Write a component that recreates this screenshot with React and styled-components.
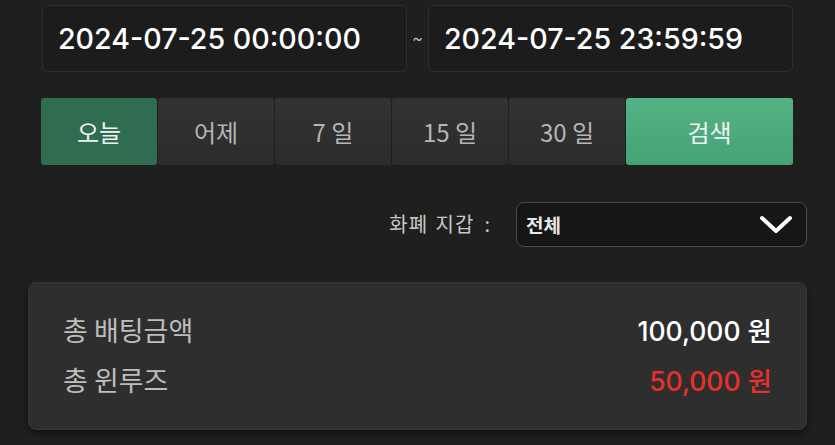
import React from 'react'
import styled, { createGlobalStyle } from 'styled-components';

const GlobalStyle = createGlobalStyle`
    html, body {
        margin: 0;
        padding: 0;
        background: #1f1f1f;
    }
    body {
        font-family: Inter, "Noto Sans CJK KR", sans-serif;
        width: 835px;
        height: 445px;
        overflow: hidden;
    }
`;

const Page = styled.div`
    display: flex;
    flex-direction: column;
    width: 835px;
    padding-top: 5px;
`;

const DateRow = styled.div`
    display: flex;
    align-items: center;
    padding: 0 42px;
`;

const DateBox = styled.div`
    box-sizing: border-box;
    width: 365px;
    height: 67px;
    display: flex;
    align-items: center;
    padding-left: 15px;
    background: #1c1c1c;
    border: 1px solid #2f2f2f;
    border-radius: 6px;
    color: #ffffff;
    font-size: 28.6px;
    font-weight: 500;
`;

const Tilde = styled.span`
    width: 21px;
    text-align: center;
    color: #bdbdbd;
    font-size: 16px;
    margin-top: -2px;
`;

const TabRow = styled.div`
    display: flex;
    padding: 0 41px;
    margin-top: 26px;
    gap: 1px;
`;

const Tab = styled.button`
    box-sizing: border-box;
    width: ${({ wide }) => (wide ? '167px' : '116px')};
    height: 67px;
    border: none;
    border-radius: 3px;
    font-family: "Noto Sans CJK KR", sans-serif;
    font-size: 24px;
    font-weight: 400;
    padding: 0;
    color: ${({ active, search }) => (active || search ? '#f2f2f2' : '#b5b5b5')};
    background: ${({ active, search }) =>
        search
            ? 'linear-gradient(#54b385, #46a275)'
            : active
            ? '#2f6c50'
            : 'linear-gradient(#333333, #2c2c2c)'};
`;

const FilterRow = styled.div`
    display: flex;
    justify-content: flex-end;
    align-items: center;
    padding-right: 28px;
    margin-top: 37px;
    gap: 25px;
`;

const FilterLabel = styled.span`
    font-family: "Noto Sans CJK KR", sans-serif;
    color: #c8c8c8;
    font-size: 20px;
    letter-spacing: 1px;
    word-spacing: 2px;
    margin-top: -3px;
`;

const Colon = styled.span`
    margin-left: 10px;
`;

const Select = styled.div`
    box-sizing: border-box;
    width: 291px;
    height: 45px;
    display: flex;
    align-items: center;
    justify-content: space-between;
    padding: 0 13px 0 9px;
    background: #161616;
    border: 1px solid #4a4a4a;
    border-radius: 8px;
    color: #e8e8e8;
    font-family: "Noto Sans CJK KR", sans-serif;
    font-size: 19px;
    font-weight: 700;
`;

const Card = styled.div`
    box-sizing: border-box;
    margin: 35px 28px 0 28px;
    height: 148px;
    background: #2e2e2e;
    border: 1px solid #363636;
    border-radius: 8px;
    box-shadow: 0 3px 6px rgba(0, 0, 0, 0.5);
    padding: 26px 34px 0 34px;
    display: flex;
    flex-direction: column;
    gap: 9px;
`;

const SummaryRow = styled.div`
    display: flex;
    justify-content: space-between;
    align-items: center;
    height: 41px;
`;

const SummaryLabel = styled.span`
    font-family: "Noto Sans CJK KR", sans-serif;
    color: #bdbdbd;
    font-size: 27px;
`;

const SummaryValue = styled.span`
    color: ${({ negative }) => (negative ? '#e8302a' : '#ffffff')};
    font-size: 26.5px;
    font-weight: 500;
`;

function Chevron() {
    return (
        <svg width="34" height="20" viewBox="0 0 34 20">
            <path d="M3 3 L17 16 L31 3" fill="none" stroke="#ffffff" strokeWidth="4" strokeLinecap="round" strokeLinejoin="round" />
        </svg>
    );
}

export default function App() {
    const tabs = ['오늘', '어제', '7 일', '15 일', '30 일'];
    return (
        <Page>
            <GlobalStyle />
            <DateRow>
                <DateBox>2024-07-25 00:00:00</DateBox>
                <Tilde>~</Tilde>
                <DateBox>2024-07-25 23:59:59</DateBox>
            </DateRow>
            <TabRow>
                {tabs.map((t, i) => (
                    <Tab key={t} active={i === 0}>{t}</Tab>
                ))}
                <Tab wide search>검색</Tab>
            </TabRow>
            <FilterRow>
                <FilterLabel>
                    화폐 지갑<Colon>:</Colon>
                </FilterLabel>
                <Select>
                    <span>전체</span>
                    <Chevron />
                </Select>
            </FilterRow>
            <Card>
                <SummaryRow>
                    <SummaryLabel>총 배팅금액</SummaryLabel>
                    <SummaryValue>100,000 원</SummaryValue>
                </SummaryRow>
                <SummaryRow>
                    <SummaryLabel>총 윈루즈</SummaryLabel>
                    <SummaryValue negative>50,000 원</SummaryValue>
                </SummaryRow>
            </Card>
        </Page>
    );
}
